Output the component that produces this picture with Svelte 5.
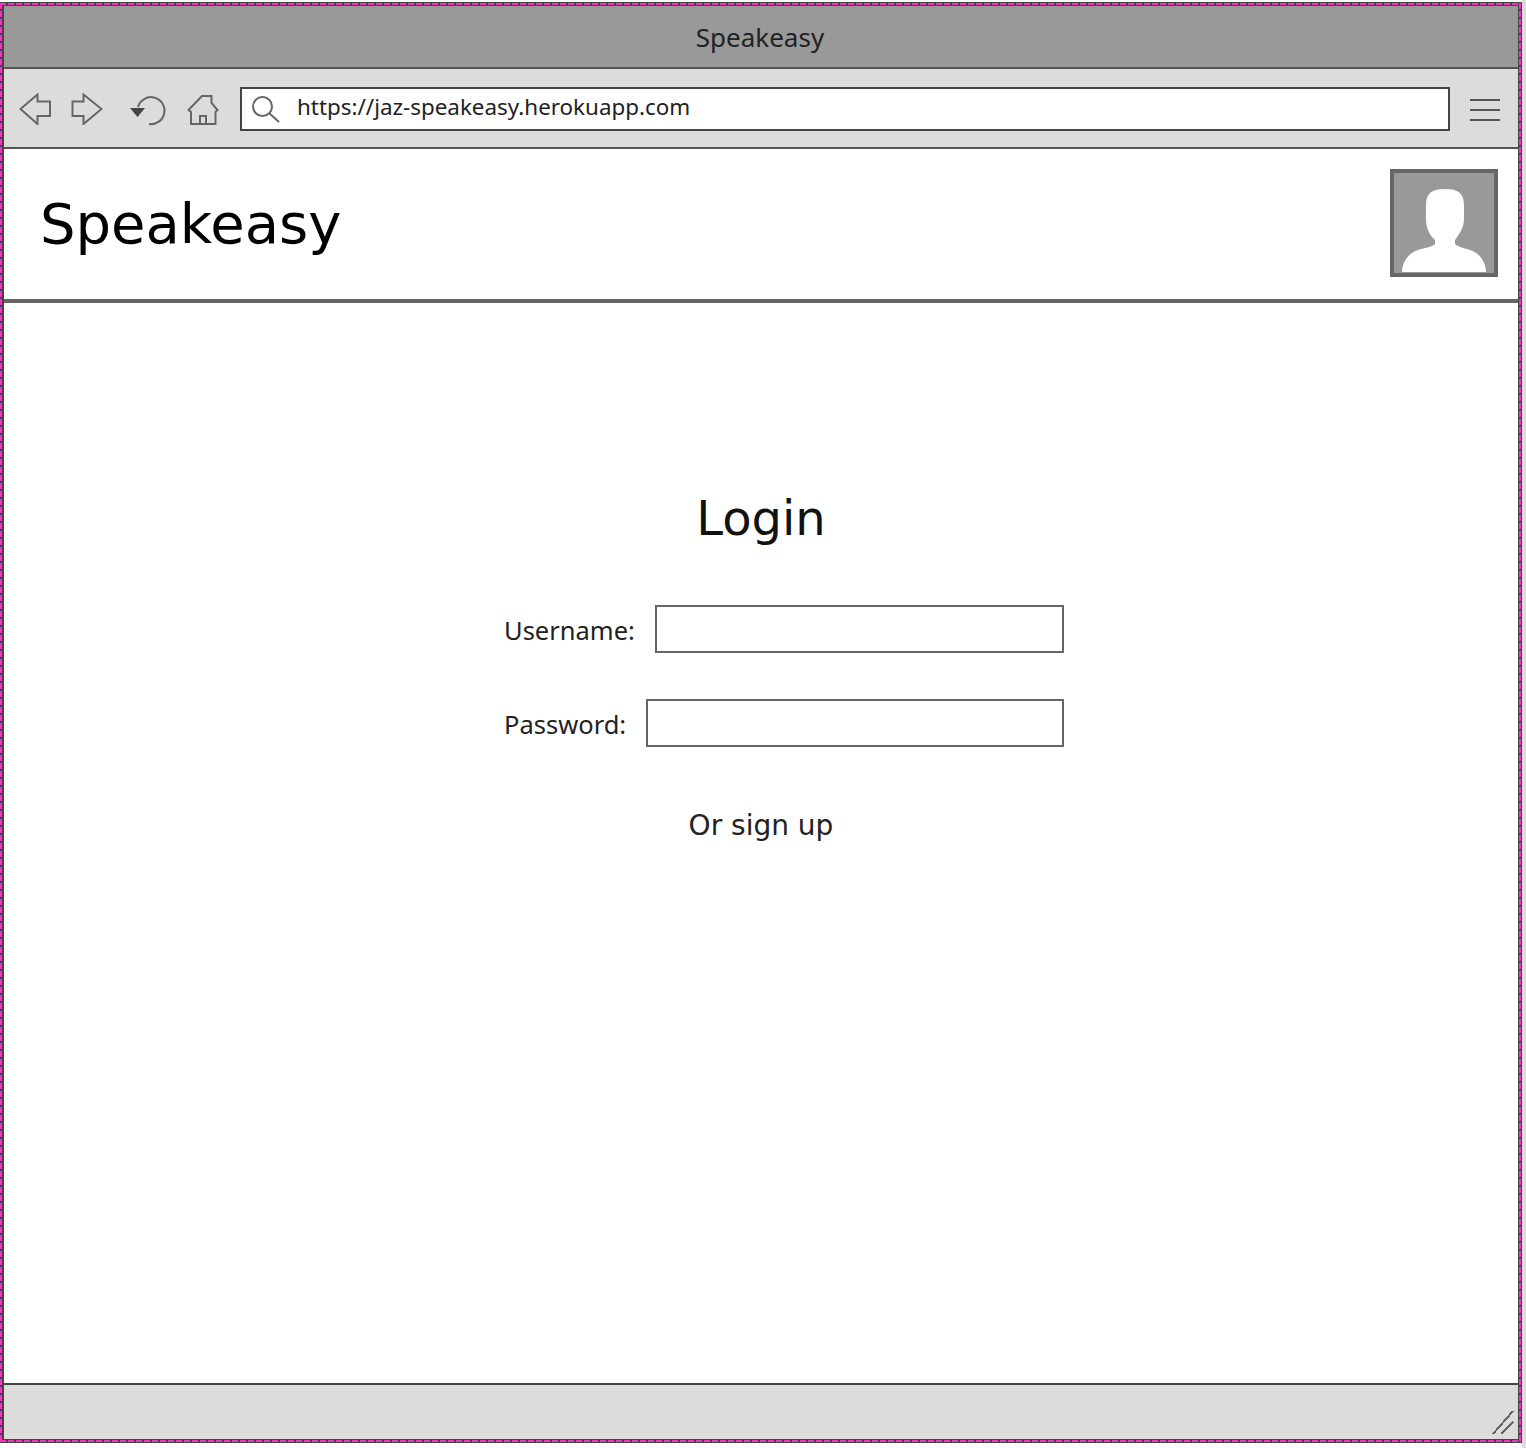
<script>
  // wireframe of a login page inside a mock browser window
  let username = $state('');
  let password = $state('');
</script>

<div class="page">
  <div class="frame">
    <div class="frame-dashes"></div>

    <div class="titlebar">Speakeasy</div>

    <div class="toolbar">
      <svg class="ic ic-back" viewBox="0 0 32 32"><path d="M1.500 16 18.500 1.500V8.500H31V23H18.500V31Z" /></svg>
      <svg class="ic ic-forward" viewBox="0 0 32 32"><path d="M1.500 8.500H12.500V1.500L30.500 16 12.500 31V23H1.500Z" /></svg>
      <svg class="ic ic-reload" viewBox="0 0 38 34">
        <path d="M9 14A13.500 13.500 0 1 1 20 31" />
        <path class="solid" d="M1 15H16L8.500 24Z" />
      </svg>
      <svg class="ic ic-home" viewBox="0 0 32 32">
        <path d="M1.500 16 15 2H24.500V9L30.500 16 28.500 18V30H4V18Z" />
        <path d="M13 30V22H19V30" />
      </svg>
      <div class="url">
        <svg class="ic-search" viewBox="0 0 30 30">
          <circle cx="11.500" cy="12.500" r="9.500" />
          <path d="M18.500 19.500 28 28" />
        </svg>
        <span>https://jaz-speakeasy.herokuapp.com</span>
      </div>
      <div class="menu"><i></i><i></i><i></i></div>
    </div>

    <header class="site-head">
      <div class="brand">Speakeasy</div>
      <div class="avatar">
        <svg viewBox="0 0 100 100">
          <path d="M51 16C38 16 32 20 32 32V46C32 54 35 60 38 64L41 67V71C38 74 30 75 24 77 14 80 8 90 8 99H92C92 90 86 80 76 77 70 75 64 74 61 71V67C66 60 70 54 70 46V32C70 20 64 16 51 16Z" />
        </svg>
      </div>
    </header>

    <main class="main">
      <h1>Login</h1>
      <form class="form">
        <label class="row">
          <span>Username:</span>
          <input bind:value={username} />
        </label>
        <label class="row">
          <span>Password:</span>
          <input type="password" bind:value={password} />
        </label>
      </form>
      <div class="signup">Or sign up</div>
    </main>

    <footer class="status">
      <svg class="grip" viewBox="0 0 24 26">
        <path d="M22 1 2 24M22 12 10 24" />
      </svg>
    </footer>
  </div>
  <div class="edge"></div>
</div>

<style>
  :global(body) {
    background: #fff;
  }
  .page {
    display: flex;
    width: 1526px;
    height: 1448px;
    overflow: hidden;
    font-family: "Noto Sans", "Open Sans", sans-serif;
    color: #222;
  }
  .edge {
    flex: 1;
    background: #dcdcdc;
  }
  .frame {
    position: relative;
    box-sizing: border-box;
    display: flex;
    flex-direction: column;
    width: 1522px;
    height: 1441px;
    margin-top: 2px;
    border: 4px solid #444;
  }
  .frame-dashes {
    position: absolute;
    inset: -3px -3px -3px -4px;
    pointer-events: none;
    background:
      linear-gradient(90deg, #ff2cc8 6px, transparent 6px) 0 0 / 8px 2px repeat-x,
      linear-gradient(90deg, #ff2cc8 6px, transparent 6px) 0 100% / 8px 2px repeat-x,
      linear-gradient(180deg, #ff2cc8 6px, transparent 6px) 0 0 / 2px 8px repeat-y,
      linear-gradient(180deg, #ff2cc8 6px, transparent 6px) 100% 0 / 2px 8px repeat-y;
  }
  .titlebar {
    box-sizing: border-box;
    height: 63px;
    display: flex;
    align-items: center;
    justify-content: center;
    padding-right: 2px;
    background: #999;
    border-bottom: 2px solid #555;
    font-size: 26px;
  }
  .toolbar {
    box-sizing: border-box;
    height: 80px;
    display: flex;
    align-items: flex-start;
    background: #dcdcdc;
    border-bottom: 2px solid #555;
  }
  .ic {
    flex: none;
    fill: none;
    stroke: #666;
    stroke-width: 2;
  }
  .ic .solid {
    fill: #444;
    stroke: none;
  }
  .ic-back {
    width: 32px;
    height: 32px;
    margin: 24px 0 0 15px;
  }
  .ic-forward {
    width: 32px;
    height: 32px;
    margin: 24px 0 0 20px;
  }
  .ic-reload {
    width: 38px;
    height: 34px;
    margin: 24px 0 0 26px;
  }
  .ic-home {
    width: 32px;
    height: 32px;
    margin: 25px 0 0 20px;
  }
  .url {
    box-sizing: border-box;
    width: 1210px;
    height: 44px;
    margin: 18px 0 0 21px;
    display: flex;
    align-items: center;
    background: #fff;
    border: 2px solid #444;
    font-size: 22.400px;
    color: #222;
  }
  .ic-search {
    flex: none;
    width: 30px;
    height: 30px;
    margin-left: 9px;
    fill: none;
    stroke: #666;
    stroke-width: 2;
  }
  .url span {
    margin: -6px 0 0 16px;
  }
  .menu {
    display: flex;
    flex-direction: column;
    gap: 8px;
    width: 30px;
    margin: 30px 0 0 20px;
  }
  .menu i {
    display: block;
    height: 2px;
    background: #555;
  }
  .site-head {
    box-sizing: border-box;
    height: 154px;
    display: flex;
    justify-content: space-between;
    align-items: flex-start;
    padding: 20px 20px 0 36px;
    border-bottom: 4px solid #666;
    background: #fff;
  }
  .brand {
    font-family: "DejaVu Sans", Verdana, sans-serif;
    font-size: 56px;
    line-height: 70px;
    margin-top: 20px;
    color: #000;
  }
  .avatar {
    box-sizing: border-box;
    width: 108px;
    height: 108px;
    border: 4px solid #666;
    background: #999;
  }
  .avatar svg {
    display: block;
    width: 100px;
    height: 100px;
    fill: #fff;
  }
  .main {
    flex: 1;
    display: flex;
    flex-direction: column;
    align-items: center;
    padding-top: 185px;
    background: #fff;
  }
  h1 {
    margin: 0;
    font-family: "DejaVu Sans", Verdana, sans-serif;
    font-size: 48px;
    font-weight: 400;
    line-height: 60px;
    color: #111;
  }
  .form {
    box-sizing: border-box;
    width: 560px;
    margin: 57px 0 0 46px;
    display: flex;
    flex-direction: column;
    gap: 46px;
  }
  .row {
    display: flex;
    align-items: center;
    gap: 20px;
    font-size: 25.500px;
  }
  .row span {
    padding-top: 2px;
  }
  .row input {
    flex: 1;
    min-width: 0;
    box-sizing: border-box;
    height: 48px;
    background: #fff;
    border: 2px solid #666;
    border-radius: 0;
    outline: none;
  }
  .signup {
    margin-top: 61px;
    font-family: "DejaVu Sans", Verdana, sans-serif;
    font-size: 28px;
    line-height: 36px;
    color: #222;
  }
  .status {
    box-sizing: border-box;
    height: 56px;
    display: flex;
    justify-content: flex-end;
    align-items: flex-end;
    padding: 0 3px 3px 0;
    background: #dcdcdc;
    border-top: 2px solid #444;
  }
  .grip {
    width: 24px;
    height: 26px;
    fill: none;
    stroke: #666;
    stroke-width: 2;
    shape-rendering: crispEdges;
  }
</style>
